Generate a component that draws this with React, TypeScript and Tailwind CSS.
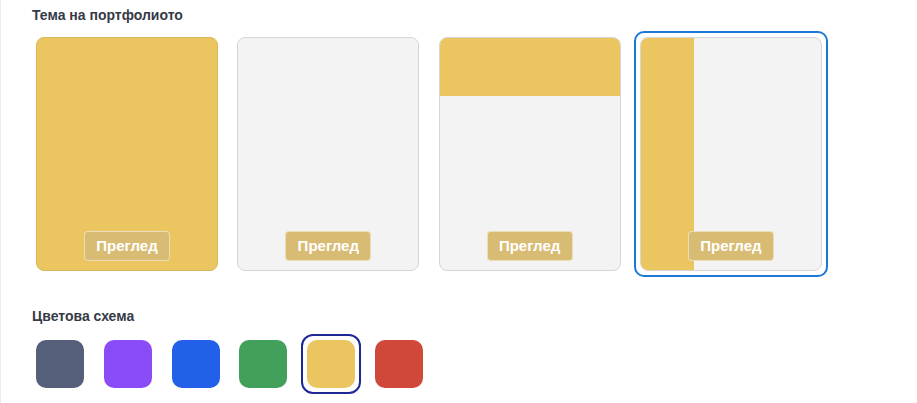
import React, { useState } from "react";

const themes = ["solid", "plain", "top", "side"];
const colors = ["#565f7a", "#8a4cf7", "#2360ea", "#43a05a", "#ebc55f", "#cf483a"];

function ThemeCard(props: { kind: string }) {
  const { kind } = props;
  return (
    <div
      className={
        "relative h-[234px] w-[182px] rounded-lg border overflow-hidden flex " +
        (kind === "solid" ? "bg-[#ebc55f] border-[#dcb65a]" : "bg-[#f3f3f3] border-[#d6d6d6]") +
        (kind === "side" ? " flex-row" : " flex-col")
      }
    >
      {kind === "top" && <div className="h-[58px] w-full bg-[#ebc55f] shrink-0" />}
      {kind === "side" && <div className="w-[53px] h-full bg-[#ebc55f] shrink-0" />}
      <div className="absolute inset-x-0 bottom-[9px] flex justify-center">
        <button
          type="button"
          className="h-[30px] w-[86px] rounded-[4px] border border-white/50 bg-[#d9bc74] text-[15px] font-bold text-white"
          style={{ fontFamily: "'Liberation Sans', Arial, sans-serif" }}
        >
          Преглед
        </button>
      </div>
    </div>
  );
}

export default function App() {
  const [theme, setTheme] = useState(3);
  const [color, setColor] = useState(4);

  return (
    <div
      className="w-[917px] h-[403px] bg-white border-l border-[#ececec] overflow-hidden"
      style={{ fontFamily: "'Liberation Sans', Arial, sans-serif" }}
    >
      <h6 className="pl-[31px] pt-[5px] text-[14px] leading-5 font-bold text-[#363a47]">
        Тема на портфолиото
      </h6>

      <div className="flex gap-[7.3px] pl-[29px] mt-[6px]">
        {themes.map((kind, index) => (
          <div
            key={kind}
            onClick={() => setTheme(index)}
            className={
              "p-[4px] border-2 rounded-[10px] cursor-pointer " +
              (theme === index ? "border-[#1c7ad6]" : "border-transparent")
            }
          >
            <ThemeCard kind={kind} />
          </div>
        ))}
      </div>

      <h6 className="pl-[31px] mt-[29px] text-[14px] leading-5 font-bold text-[#363a47]">
        Цветова схема
      </h6>

      <div className="flex gap-[7.8px] pl-[29px] mt-[8px]">
        {colors.map((c, index) => (
          <div
            key={c}
            onClick={() => setColor(index)}
            className={
              "p-[4px] border-2 rounded-[12px] cursor-pointer " +
              (color === index ? "border-[#1e2796]" : "border-transparent")
            }
          >
            <div className="h-[48px] w-[48px] rounded-[10px]" style={{ backgroundColor: c }} />
          </div>
        ))}
      </div>
    </div>
  );
}
